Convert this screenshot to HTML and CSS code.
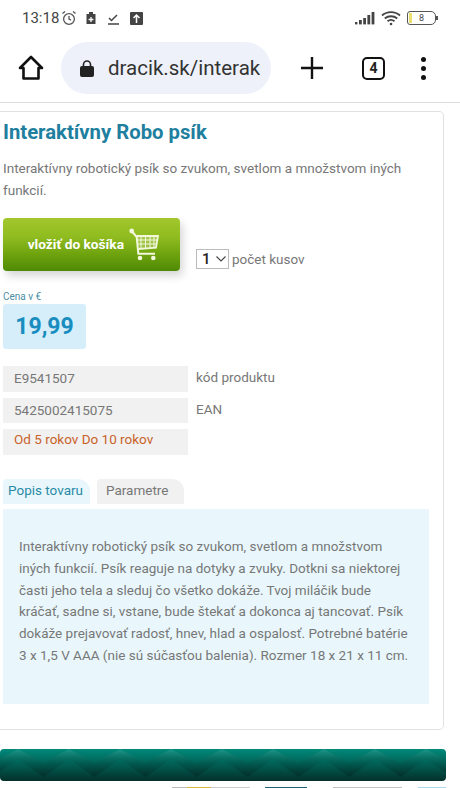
FILE: index.html
```html
<!DOCTYPE html>
<html lang="sk">
<head>
    <meta charset="UTF-8">
    <meta name="viewport" content="width=device-width, initial-scale=1.0">
    <title>Interaktívny Robo psík</title>
    <link rel="stylesheet" href="styles.css">
</head>
<body>
    <div class="status-bar">
        <span class="time">13:18</span>
        <svg class="st-icon alarm" width="16" height="16" viewBox="0 0 16 16" fill="none" stroke="#555" stroke-width="1.3">
            <circle cx="8" cy="9" r="5.4"/>
            <path d="M8 6v3.2l2 1M1.5 3.6 4 1.5M14.5 3.6 12 1.5"/>
        </svg>
        <svg class="st-icon" width="12" height="14" viewBox="0 0 12 14">
            <path d="M4 1h4v2h2.500v10h-9V3H4z" fill="#444"/>
            <path d="M6 6v5M3.600 8.500h4.800" stroke="#fff" stroke-width="1.300"/>
        </svg>
        <svg class="st-icon" width="13" height="13" viewBox="0 0 13 13" fill="none" stroke="#444" stroke-width="1.500">
            <path d="M1 12h11M2 6l2.500 2.500L10 3"/>
        </svg>
        <svg class="st-icon" width="13" height="13" viewBox="0 0 13 13">
            <rect width="13" height="13" rx="1" fill="#444"/>
            <path d="M6.500 11V3.500M3.500 6l3-3 3 3" fill="none" stroke="#fff" stroke-width="1.500"/>
        </svg>
        <div class="status-right">
            <svg width="20" height="13" viewBox="0 0 20 13" fill="#444">
                <rect x="0" y="10" width="2.400" height="2.400"/>
                <rect x="4" y="8" width="2.800" height="4.400"/>
                <rect x="8.200" y="6" width="2.800" height="6.400"/>
                <rect x="12.400" y="3" width="2.800" height="9.400"/>
                <rect x="16.600" y="0" width="2.800" height="12.400"/>
            </svg>
            <svg class="wifi" width="20" height="16" viewBox="0 0 20 16" fill="none" stroke="#444" stroke-width="1.800">
                <path d="M1 5.500C6 1 14 1 19 5.500M3.800 8.500C7.300 5.500 12.700 5.500 16.200 8.500M6.500 11.300c2-1.600 5-1.600 7 0"/>
                <circle cx="10" cy="14" r="1.300" fill="#444" stroke="none"/>
            </svg>
            <div class="battery"><span class="battery-level"></span>8</div>
        </div>
    </div>

    <div class="toolbar">
        <svg class="home" width="26" height="26" viewBox="0 0 26 26" fill="none" stroke="#111" stroke-width="2.600" stroke-linejoin="round">
            <path d="M2 13 13 2l11 11h-3.500v10.500h-15V13z"/>
        </svg>
        <div class="url-pill">
            <svg width="14" height="17" viewBox="0 0 14 17">
                <path d="M3.500 7V4.500a3.500 3.500 0 0 1 7 0V7" fill="none" stroke="#222" stroke-width="1.600"/>
                <rect y="6" width="14" height="11" rx="2" fill="#222"/>
            </svg>
            <span class="url-text">dracik.sk/interakt</span>
        </div>
        <svg class="plus" width="22" height="22" viewBox="0 0 22 22" stroke="#111" stroke-width="2.400">
            <path d="M0 11h22M11 0v22"/>
        </svg>
        <div class="tab-count">4</div>
        <div class="menu-dots"><span></span><span></span><span></span></div>
    </div>

    <div class="card">
        <h1 class="title">Interaktívny Robo psík</h1>
        <p class="lead">Interaktívny robotický psík so zvukom, svetlom a množstvom iných funkcií.</p>

        <div class="buy-row">
            <div class="buy-btn">
                <span>vložiť do košíka</span>
                <svg width="34" height="34" viewBox="0 0 34 34" fill="none" stroke="#f3f7dc">
                    <circle cx="3.700" cy="4" r="2.400" fill="#f3f7dc" stroke="none"/>
                    <path d="M3.700 4 8.700 10 10.300 26.700H27" stroke-width="2"/>
                    <path d="M8.700 9H30L28 20.700 10.300 22" stroke-width="1.800" fill="rgba(243,247,220,.25)"/>
                    <path d="M13 9v12.500M17.500 9v12M22 9v12M26 9v11.500M9 13h20.500M9.500 17h19.500" stroke-width="1"/>
                    <circle cx="12" cy="31" r="2.300" fill="#f3f7dc" stroke="none"/>
                    <circle cx="25.300" cy="31" r="2.300" fill="#f3f7dc" stroke="none"/>
                </svg>
            </div>
            <div class="qty">
                <div class="qty-select">1
                    <svg width="10" height="6" viewBox="0 0 10 6" fill="none" stroke="#444" stroke-width="1.100"><path d="M.5.500 5 5 9.500.500"/></svg>
                </div>
                <span>počet kusov</span>
            </div>
        </div>

        <div class="price-label">Cena v €</div>
        <div class="price">19,99</div>

        <div class="info-row">
            <div class="info-value">E9541507</div>
            <div class="info-label">kód produktu</div>
        </div>
        <div class="info-row">
            <div class="info-value">5425002415075</div>
            <div class="info-label">EAN</div>
        </div>
        <div class="info-row">
            <div class="info-value age">Od 5 rokov Do 10 rokov</div>
        </div>

        <div class="tabs">
            <div class="tab active">Popis tovaru</div>
            <div class="tab">Parametre</div>
        </div>
        <div class="tab-panel">
            Interaktívny robotický psík so zvukom, svetlom a množstvom iných funkcií. Psík reaguje na dotyky a zvuky. Dotkni sa niektorej časti jeho tela a sleduj čo všetko dokáže. Tvoj miláčik bude kráčať, sadne si, vstane, bude štekať a dokonca aj tancovať. Psík dokáže prejavovať radosť, hnev, hlad a ospalosť. Potrebné batérie 3 x 1,5 V AAA (nie sú súčasťou balenia). Rozmer 18 x 21 x 11 cm.
        </div>
    </div>

    <svg class="banner" width="446" height="32">
        <defs>
            <linearGradient id="bannerFade" x1="0" y1="0" x2="0" y2="1">
                <stop offset="0" stop-color="#008a7a"/>
                <stop offset="1" stop-color="#03302a"/>
            </linearGradient>
            <linearGradient id="chevFade" x1="0" y1="0" x2="0" y2="1">
                <stop offset="0" stop-color="#fff" stop-opacity=".12"/>
                <stop offset=".5" stop-color="#000" stop-opacity=".07"/>
                <stop offset="1" stop-color="#000" stop-opacity=".22"/>
            </linearGradient>
            <pattern id="chev" x="-7.500" width="51" height="32" patternUnits="userSpaceOnUse">
                <path d="M0 28 25.500 10 51 28V14L25.500 0 0 14z" fill="url(#chevFade)"/>
            </pattern>
        </defs>
        <rect width="446" height="32" rx="4" fill="url(#bannerFade)"/>
        <rect width="446" height="32" rx="4" fill="url(#chev)"/>
    </svg>

    <div class="next-strip">
        <span class="strip-a"></span>
        <span class="strip-b"></span>
        <span class="strip-c"></span>
        <span class="strip-d"></span>
    </div>
</body>
</html>
```
FILE: styles.css
```css
html, body {
    margin: 0;
    padding: 0;
    height: 788px;
    overflow: hidden;
    background: #fff;
    font-family: Roboto, "Liberation Sans", sans-serif;
}

.status-bar {
    height: 36px;
    display: flex;
    align-items: center;
    padding: 0 24px 0 22px;
    color: #444;
    box-sizing: border-box;
}
.time { font-size: 15px; margin-right: 2px; }
.st-icon { margin-right: 10px; }
.st-icon.alarm { margin-right: 8px; }
.status-right {
    margin-left: auto;
    display: flex;
    align-items: center;
    gap: 6px;
}
.battery {
    width: 27px;
    height: 12px;
    border: 1px solid #555;
    border-radius: 3px 5px 5px 3px;
    font-size: 9px;
    line-height: 12px;
    text-align: center;
    color: #444;
    position: relative;
}
.battery::after {
    content: "";
    position: absolute;
    right: -3px;
    top: 4px;
    width: 2px;
    height: 4px;
    background: #555;
}
.battery-level {
    position: absolute;
    left: 1px;
    top: 1px;
    width: 3px;
    height: 10px;
    background: #eadf70;
}

.toolbar {
    height: 67px;
    display: flex;
    align-items: center;
    border-bottom: 1px solid #dedede;
    box-sizing: border-box;
    padding: 0 0 2px 18px;
}
.url-pill {
    width: 210px;
    height: 52px;
    margin-left: 17px;
    background: #eef1f9;
    border-radius: 26px;
    display: flex;
    align-items: center;
    padding: 0 11px 0 19px;
    box-sizing: border-box;
    gap: 14px;
}
.url-pill svg { flex: none; }
.url-text {
    font-size: 20.500px;
    color: #333;
    white-space: nowrap;
    overflow: hidden;
}
.plus { margin-left: 30px; }
.tab-count {
    width: 19px;
    height: 19px;
    margin-left: 39px;
    border: 2.400px solid #111;
    border-radius: 5px;
    font-size: 14px;
    font-weight: 700;
    line-height: 19px;
    text-align: center;
    color: #222;
}
.menu-dots {
    margin-left: 36px;
    display: flex;
    flex-direction: column;
    gap: 4px;
}
.menu-dots span {
    width: 5px;
    height: 5px;
    border-radius: 50%;
    background: #111;
}

.card {
    width: 444px;
    height: 619px;
    margin-top: 8px;
    padding: 0 0 0 3px;
    border: 1px solid #e2e2e2;
    border-left: 0;
    border-radius: 0 5px 5px 0;
    box-sizing: border-box;
    color: #777;
    font-size: 13.500px;
}
.title {
    margin: 7px 0 0;
    font-size: 20.300px;
    line-height: 26px;
    font-weight: 700;
    color: #1f7f9f;
}
.lead {
    margin: 12px 0 0;
    width: 420px;
    line-height: 22px;
}

.buy-row {
    display: flex;
    margin-top: 17px;
}
.buy-btn {
    width: 177px;
    height: 53px;
    display: flex;
    align-items: center;
    justify-content: flex-end;
    gap: 4px;
    padding: 0 18px 2px 0;
    box-sizing: border-box;
    border-radius: 4px;
    background: linear-gradient(#a2c72c, #90bc20 35%, #72a610 65%, #4f8a05);
    box-shadow: 3px 5px 8px rgba(0,0,0,.16);
    color: #fff;
    font-size: 13.700px;
    font-weight: 700;
}
.qty {
    display: flex;
    align-items: center;
    gap: 3px;
    margin: 31px 0 0 16px;
    height: 20px;
}
.qty-select {
    width: 33px;
    height: 20px;
    box-sizing: border-box;
    border: 1px solid #bbb;
    color: #222;
    font-size: 15px;
    font-weight: 500;
    line-height: 18px;
    padding-left: 5px;
    display: flex;
    align-items: center;
    gap: 5px;
}

.price-label {
    margin-top: 20px;
    font-size: 10px;
    line-height: 12px;
    color: #4b8ea5;
}
.price {
    width: 83px;
    height: 45px;
    margin-top: 1px;
    background: #d6eefa;
    border-radius: 3px;
    font-size: 23px;
    font-weight: 700;
    line-height: 45px;
    text-align: center;
    color: #1a8dc0;
}

.info-row {
    display: flex;
    margin-top: 6px;
}
.price + .info-row { margin-top: 17px; }
.info-value {
    width: 185px;
    height: 25.500px;
    padding: 0 11px;
    box-sizing: border-box;
    background: #f1f1f1;
    line-height: 25px;
}
.info-value.age {
    line-height: 21px;
    color: #c9622a;
}
.info-label {
    margin-left: 8px;
    line-height: 22px;
}

.tabs {
    display: flex;
    gap: 7px;
    margin-top: 24px;
}
.tab {
    height: 25px;
    width: 87px;
    padding-left: 9px;
    box-sizing: border-box;
    background: #f1f1f1;
    border-radius: 4px 12px 0 0;
    line-height: 23px;
}
.tab.active {
    padding-left: 5px;
    background: #e9f7fd;
    color: #2a8aa6;
}
.tab-panel {
    width: 426px;
    height: 195px;
    margin-top: 5px;
    padding: 27.500px 16px 0;
    box-sizing: border-box;
    background: #e9f7fd;
    line-height: 21.800px;
}

.banner {
    display: block;
    margin-top: 19px;
}

.next-strip {
    display: flex;
    height: 2px;
    margin-top: 6px;
    padding-left: 172px;
}
.next-strip span { display: block; height: 2px; }
.strip-a { width: 78px; background: linear-gradient(90deg, #bbb 19%, #d8b840 19%, #d8b840 50%, #ccc 50%); }
.strip-b { width: 42px; margin-left: 15px; background: #1f5f78; }
.strip-c { width: 69px; margin-left: 26px; background: #c4c4c4; }
.strip-d { width: 28px; margin-left: 16px; background: #a8d8ee; }
```
